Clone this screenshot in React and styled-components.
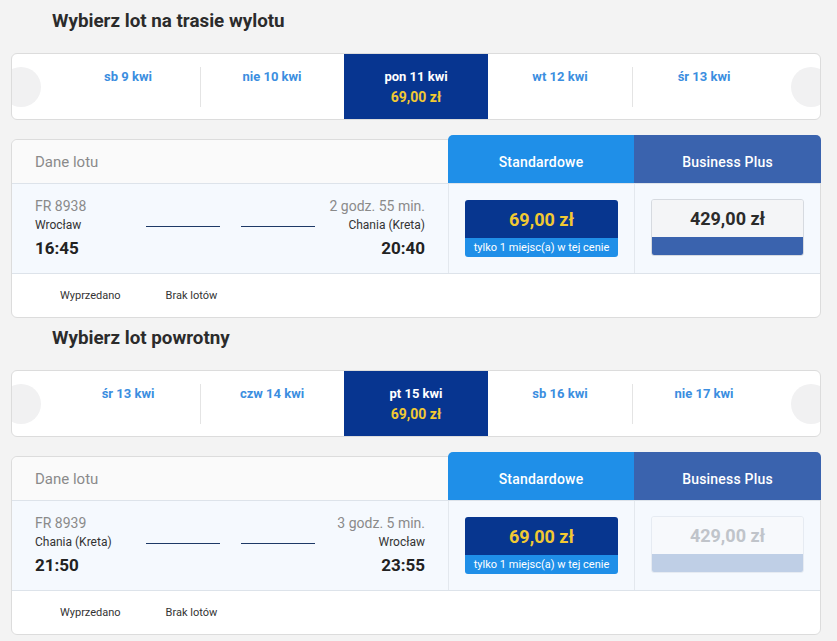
import React from 'react';
import styled, { createGlobalStyle } from 'styled-components';

const GlobalStyle = createGlobalStyle`
body{
  margin:0;
  background:#f3f3f3;
  font-family: Roboto, 'Noto Sans', sans-serif;
}
`;

const Page = styled.div`
display:flex;
flex-direction:column;
gap:9px;
padding:10px 16px 0 11px;
width:810px;
`;

const Section = styled.section`
display:flex;
flex-direction:column;
`;

const Title = styled.h2`
margin:0 0 21px 41px;
font-size:18.8px;
line-height:22px;
font-weight:700;
color:#2b2b2b;
`;

const DateBar = styled.div`
position:relative;
display:flex;
height:65px;
padding:0 44px;
margin-bottom:19px;
background:#fff;
border:1px solid #dcdcdc;
border-radius:6px;
overflow:hidden;
`;

const Arrow = styled.div`
position:absolute;
top:13px;
${(p) => (p.side === 'left' ? 'left:-11px;' : 'right:-11px;')}
width:40px;
height:40px;
border-radius:50%;
background:#f1f1f2;
`;

const DateItem = styled.div`
position:relative;
flex:1;
display:flex;
flex-direction:column;
align-items:center;
gap:2px;
padding-top:14px;
background:${(p) => (p.active ? '#073590' : 'transparent')};
color:${(p) => (p.active ? '#fff' : '#3b8ee0')};
font-size:13px;
line-height:18px;
font-weight:700;
${(p) =>
  p.divider &&
  `&::before{
    content:'';
    position:absolute;
    left:0;
    top:13px;
    bottom:12px;
    width:1px;
    background:#e4e4e4;
  }`}
`;

const DayPrice = styled.span`
color:#f1c933;
font-size:14px;
`;

const Card = styled.div`
background:#fff;
border:1px solid #dcdcdc;
border-radius:6px;
`;

const Row = styled.div`
display:grid;
grid-template-columns:1fr 186px 186px;
border-bottom:1px solid #dde3ea;
`;

const HeadRow = styled(Row)`
height:43px;
background:#fafafa;
border-radius:6px 6px 0 0;
`;

const HeadLabel = styled.div`
display:flex;
align-items:center;
padding-left:23px;
font-size:15px;
color:#8a8a8a;
`;

const FareTab = styled.div`
display:flex;
align-items:center;
justify-content:center;
height:48px;
padding-top:6px;
box-sizing:border-box;
margin-top:-5px;
margin-right:${(p) => (p.business ? '-1px' : '0')};
border-radius:${(p) => (p.business ? '0 5px 0 0' : '5px 0 0 0')};
background:${(p) => (p.business ? '#3a63ae' : '#1f8fe8')};
color:#fff;
font-size:14px;
font-weight:500;
letter-spacing:0.2px;
`;

const BodyRow = styled(Row)`
height:89px;
background:#f5f9fe;
`;

const Info = styled.div`
display:flex;
flex-direction:column;
padding:13px 23px 0 23px;
`;

const InfoLine = styled.div`
display:grid;
grid-template-columns:1fr auto 1fr;
align-items:center;
`;

const FlightNo = styled.span`
font-size:14px;
line-height:18px;
color:#8a8a8a;
`;

const Duration = styled(FlightNo)`
grid-column:3;
text-align:right;
`;

const City = styled.span`
font-size:12px;
line-height:21px;
color:#333;
text-align:${(p) => (p.right ? 'right' : 'left')};
`;

const Time = styled.span`
font-size:17px;
line-height:25px;
font-weight:700;
color:#222;
text-align:${(p) => (p.right ? 'right' : 'left')};
grid-column:${(p) => (p.right ? 3 : 1)};
`;

const Route = styled.div`
display:flex;
gap:21px;
padding-top:2px;
`;

const RouteLine = styled.div`
width:74px;
height:1.5px;
background:#1d3966;
`;

const FareCell = styled.div`
padding:16px 16px 0 16px;
border-left:1px solid #e3e8ee;
`;

const FareButton = styled.div`
display:flex;
flex-direction:column;
border-radius:3px;
overflow:hidden;
margin-top:${(p) => (p.business ? '-1px' : '0')};
border:${(p) =>
  p.business ? `1px solid ${p.disabled ? '#e6ebf2' : '#d6dae0'}` : 'none'};
`;

const FarePrice = styled.div`
display:flex;
align-items:center;
justify-content:center;
height:${(p) => (p.business ? '37px' : '38px')};
font-size:18px;
font-weight:700;
background:${(p) =>
  p.business ? (p.disabled ? '#f7f9fc' : '#f4f5f7') : '#07368f'};
color:${(p) =>
  p.business ? (p.disabled ? '#c0c4ca' : '#2b2b2b') : '#f1c933'};
`;

const FareNote = styled.div`
display:flex;
align-items:center;
justify-content:center;
height:${(p) => (p.business ? '18px' : '19px')};
font-size:11px;
color:#fff;
background:${(p) =>
  p.business ? (p.disabled ? '#bfcfe6' : '#3a63ae') : '#1f8fe8'};
`;

const FootRow = styled.div`
display:flex;
align-items:center;
gap:45px;
height:43px;
padding-left:48px;
font-size:11px;
color:#333;
`;

const outbound = {
  title: 'Wybierz lot na trasie wylotu',
  days: [
    { label: 'sb 9 kwi' },
    { label: 'nie 10 kwi', divider: true },
    { label: 'pon 11 kwi', price: '69,00 zł', active: true },
    { label: 'wt 12 kwi' },
    { label: 'śr 13 kwi', divider: true },
  ],
  flight: {
    no: 'FR 8938',
    duration: '2 godz. 55 min.',
    from: 'Wrocław',
    to: 'Chania (Kreta)',
    dep: '16:45',
    arr: '20:40',
    business: '429,00 zł',
    businessDisabled: false,
  },
};

const inbound = {
  title: 'Wybierz lot powrotny',
  days: [
    { label: 'śr 13 kwi' },
    { label: 'czw 14 kwi', divider: true },
    { label: 'pt 15 kwi', price: '69,00 zł', active: true },
    { label: 'sb 16 kwi' },
    { label: 'nie 17 kwi', divider: true },
  ],
  flight: {
    no: 'FR 8939',
    duration: '3 godz. 5 min.',
    from: 'Chania (Kreta)',
    to: 'Wrocław',
    dep: '21:50',
    arr: '23:55',
    business: '429,00 zł',
    businessDisabled: true,
  },
};

const FlightSection = ({ data }) => {
  const f = data.flight;
  return (
    <Section>
      <Title>{data.title}</Title>
      <DateBar>
        <Arrow side="left" />
        {data.days.map((d) => (
          <DateItem key={d.label} active={d.active} divider={d.divider}>
            {d.label}
            {d.price && <DayPrice>{d.price}</DayPrice>}
          </DateItem>
        ))}
        <Arrow side="right" />
      </DateBar>
      <Card>
        <HeadRow>
          <HeadLabel>Dane lotu</HeadLabel>
          <FareTab>Standardowe</FareTab>
          <FareTab business>Business Plus</FareTab>
        </HeadRow>
        <BodyRow>
          <Info>
            <InfoLine>
              <FlightNo>{f.no}</FlightNo>
              <Duration>{f.duration}</Duration>
            </InfoLine>
            <InfoLine>
              <City>{f.from}</City>
              <Route>
                <RouteLine />
                <RouteLine />
              </Route>
              <City right>{f.to}</City>
            </InfoLine>
            <InfoLine>
              <Time>{f.dep}</Time>
              <Time right>{f.arr}</Time>
            </InfoLine>
          </Info>
          <FareCell>
            <FareButton>
              <FarePrice>69,00 zł</FarePrice>
              <FareNote>tylko 1 miejsc(a) w tej cenie</FareNote>
            </FareButton>
          </FareCell>
          <FareCell>
            <FareButton business disabled={f.businessDisabled}>
              <FarePrice business disabled={f.businessDisabled}>{f.business}</FarePrice>
              <FareNote business disabled={f.businessDisabled} />
            </FareButton>
          </FareCell>
        </BodyRow>
        <FootRow>
          <span>Wyprzedano</span>
          <span>Brak lotów</span>
        </FootRow>
      </Card>
    </Section>
  );
};

const App = () => (
  <>
    <GlobalStyle />
    <Page>
      <FlightSection data={outbound} />
      <FlightSection data={inbound} />
    </Page>
  </>
);

export default App;
